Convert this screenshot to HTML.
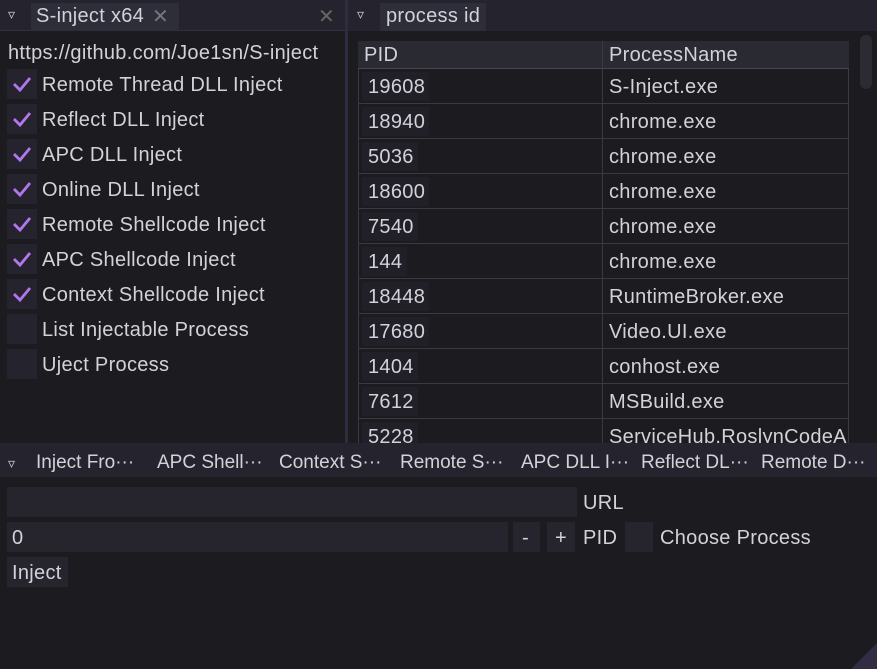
<!DOCTYPE html>
<html><head><meta charset="utf-8"><style>
*{margin:0;padding:0;box-sizing:border-box}
body{width:877px;height:669px;background:#1b1b20;font-family:"Liberation Sans","Noto Sans CJK SC",sans-serif;font-size:20px;letter-spacing:0.3px;color:#d2d2d8;position:relative;overflow:hidden}
.a{position:absolute;white-space:nowrap}
.tb{background:#25242e}
.fr{background:#26252e}
.t{line-height:22px;margin-top:1px}
.bt{font-size:19px;letter-spacing:0}
.cb{position:absolute;left:7px;width:30px;height:30px;background:#25242e}
.cb svg{position:absolute;left:5px;top:6px}
.row{position:absolute;left:358px;width:491px;height:35px;border-bottom:1px solid #3a3a42}
</style></head><body>
<div class="a tb" style="left:0;top:0;width:345px;height:31px"></div>
<div class="a" style="left:0;top:30px;width:345px;height:1px;background:#33313f"></div>
<div class="a" style="left:31px;top:3px;width:148px;height:28px;background:#2e2d3a"></div>
<div class="a" style="left:8px;top:6px;font-size:14px;color:#ccc">&#9663;</div>
<div class="a t" style="left:36px;top:4px">S-inject x64</div>
<div class="a" style="left:152px;top:4px;color:#777;font-size:20px">&#10005;</div>
<div class="a" style="left:318px;top:4px;color:#666;font-size:20px">&#10005;</div>
<div class="a" style="left:345px;top:0;width:3px;height:443px;background:#2f2c40"></div>
<div class="a tb" style="left:348px;top:0;width:529px;height:31px"></div>
<div class="a" style="left:380px;top:3px;width:106px;height:28px;background:#2e2d3a"></div>
<div class="a" style="left:357px;top:6px;font-size:14px;color:#ccc">&#9663;</div>
<div class="a t" style="left:386px;top:4px">process id</div>

<div class="a t" style="left:8px;top:41px">https://github.com/Joe1sn/S-inject</div>
<div id="cbs"></div>

<div class="a" style="left:358px;top:41px;width:491px;height:402px;border:1px solid #3a3a42;border-bottom:none"></div>
<div class="a" style="left:358px;top:41px;width:491px;height:28px;background:#2a2a32;border-bottom:1px solid #44444c"></div>
<div class="a t" style="left:364px;top:43px">PID</div>
<div class="a t" style="left:609px;top:43px">ProcessName</div>
<div class="a" style="left:602px;top:41px;width:1px;height:402px;background:#3a3a42"></div>
<div class="a" style="left:860px;top:35px;width:12px;height:54px;border-radius:6px;background:#2c2b33"></div>
<div id="rows"></div>

<div class="a tb" style="left:0;top:443px;width:877px;height:34px"></div>
<div class="a" style="left:8px;top:455px;font-size:14px;color:#ccc">&#9663;</div>
<div class="a t bt" style="left:36px;top:451px">Inject Fro···</div>
<div class="a t bt" style="left:157px;top:451px">APC Shell···</div>
<div class="a t bt" style="left:279px;top:451px">Context S···</div>
<div class="a t bt" style="left:400px;top:451px">Remote S···</div>
<div class="a t bt" style="left:521px;top:451px">APC DLL I···</div>
<div class="a t bt" style="left:641px;top:451px">Reflect DL···</div>
<div class="a t bt" style="left:761px;top:451px">Remote D···</div>

<div class="a fr" style="left:7px;top:487px;width:570px;height:30px"></div>
<div class="a t" style="left:583px;top:491px">URL</div>
<div class="a fr" style="left:7px;top:522px;width:501px;height:30px"></div>
<div class="a t" style="left:12px;top:526px">0</div>
<div class="a fr" style="left:513px;top:522px;width:27px;height:30px"></div>
<div class="a t" style="left:522px;top:526px">-</div>
<div class="a fr" style="left:547px;top:522px;width:28px;height:30px"></div>
<div class="a t" style="left:555px;top:526px">+</div>
<div class="a t" style="left:583px;top:526px">PID</div>
<div class="a fr" style="left:625px;top:522px;width:28px;height:30px"></div>
<div class="a t" style="left:660px;top:526px">Choose Process</div>
<div class="a fr" style="left:7px;top:557px;width:61px;height:30px"></div>
<div class="a t" style="left:12px;top:561px">Inject</div>
<svg class="a" style="left:851px;top:643px" width="26" height="26"><polygon points="26,0 26,26 0,26" fill="#322c45"/></svg>

<script>
var L=["Remote Thread DLL Inject","Reflect DLL Inject","APC DLL Inject","Online DLL Inject","Remote Shellcode Inject","APC Shellcode Inject","Context Shellcode Inject","List Injectable Process","Uject Process"];
var h="";
L.forEach(function(s,i){var y=69+i*35;
h+='<div class="cb" style="top:'+y+'px">'+(i<7?'<svg width="20" height="18"><path d="M2 9 L8 15 L18 3" fill="none" stroke="#b277ee" stroke-width="2.8"/></svg>':'')+'</div>';
h+='<div class="a t" style="left:42px;top:'+(y+4)+'px">'+s+'</div>';});
document.getElementById("cbs").innerHTML=h;
var R=[["19608","S-Inject.exe"],["18940","chrome.exe"],["5036","chrome.exe"],["18600","chrome.exe"],["7540","chrome.exe"],["144","chrome.exe"],["18448","RuntimeBroker.exe"],["17680","Video.UI.exe"],["1404","conhost.exe"],["7612","MSBuild.exe"],["5228","ServiceHub.RoslynCodeAr"]];
h="";
R.forEach(function(r,i){var y=69+i*35;
h+='<div class="row" style="top:'+y+'px"></div>';
h+='<div class="a" style="left:362px;top:'+(y+3)+'px;width:'+(r[0].length*11+12)+'px;height:29px;background:#212028"></div>';
h+='<div class="a t" style="left:368px;top:'+(y+6)+'px">'+r[0]+'</div>';
h+='<div class="a t" style="left:609px;top:'+(y+6)+'px;width:238px;overflow:hidden">'+r[1]+'</div>';});
document.getElementById("rows").innerHTML=h;
</script>
</body></html>
